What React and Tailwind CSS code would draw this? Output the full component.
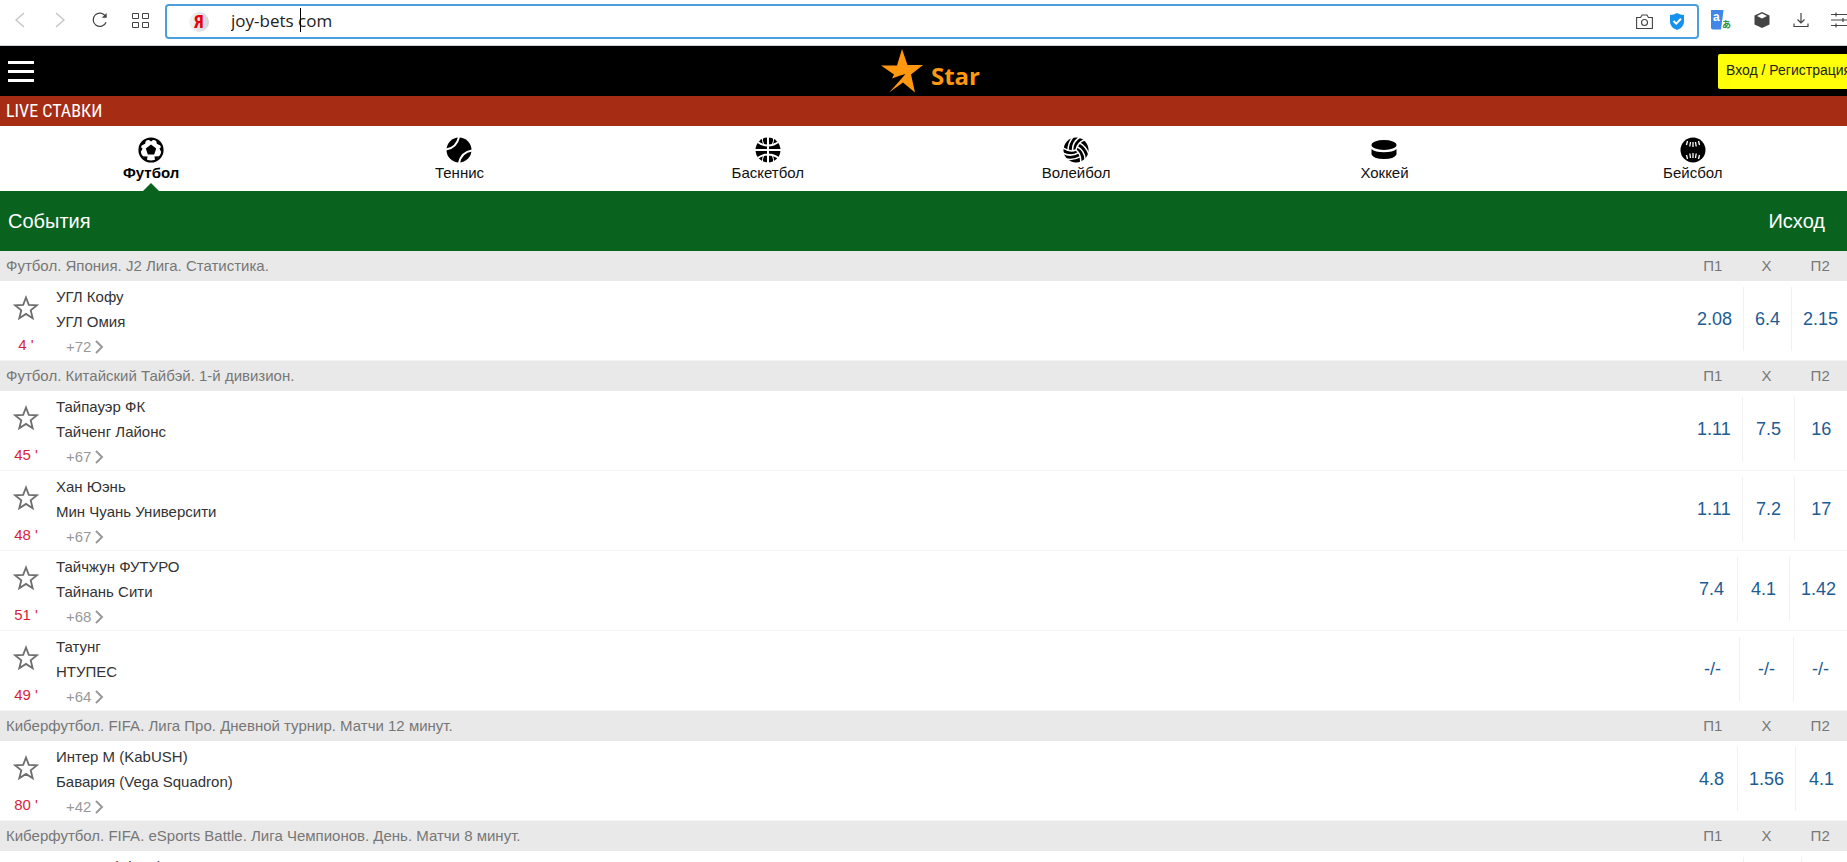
const sports = [
  { name: 'Футбол', icon: FootballIcon },
  { name: 'Теннис', icon: TennisIcon },
  { name: 'Баскетбол', icon: BasketballIcon },
  { name: 'Волейбол', icon: VolleyballIcon },
  { name: 'Хоккей', icon: HockeyIcon },
  { name: 'Бейсбол', icon: BaseballIcon },
];

const leagues = [
  {
    title: 'Футбол. Япония. J2 Лига. Статистика.',
    matches: [
      { home: 'УГЛ Кофу', away: 'УГЛ Омия', time: 4, more: 72, odds: ['2.08', '6.4', '2.15'] },
    ],
  },
  {
    title: 'Футбол. Китайский Тайбэй. 1-й дивизион.',
    matches: [
      { home: 'Тайпауэр ФК', away: 'Тайченг Лайонс', time: 45, more: 67, odds: ['1.11', '7.5', '16'] },
      { home: 'Хан Юэнь', away: 'Мин Чуань Университи', time: 48, more: 67, odds: ['1.11', '7.2', '17'] },
      { home: 'Тайчжун ФУТУРО', away: 'Тайнань Сити', time: 51, more: 68, odds: ['7.4', '4.1', '1.42'] },
      { home: 'Татунг', away: 'НТУПЕС', time: 49, more: 64, odds: ['-/-', '-/-', '-/-'] },
    ],
  },
  {
    title: 'Киберфутбол. FIFA. Лига Про. Дневной турнир. Матчи 12 минут.',
    matches: [
      { home: 'Интер М (KabUSH)', away: 'Бавария (Vega Squadron)', time: 80, more: 42, odds: ['4.8', '1.56', '4.1'] },
    ],
  },
  {
    title: 'Киберфутбол. FIFA. eSports Battle. Лига Чемпионов. День. Матчи 8 минут.',
    matches: [
      { home: 'Рома М (Pirate)', away: 'Интер М (Kray)', time: 3, more: 38, odds: ['2.08', '4.15', '2.6'] },
    ],
  },
];

function FootballIcon() {
  return (
    <svg viewBox="0 0 26 26" className="size-[26px]">
      <circle cx="13" cy="13" r="11.5" fill="#fff" stroke="#000" strokeWidth="2.2" />
      <path d="M13 7.6l5.2 3.8-2 6.1H9.8l-2-6.1z" />
      <path d="M9 1.6h8l-4 2.8zM1.8 9.6l.6 6.2 2.2-4.3zM24.2 9.6l-.6 6.2-2.2-4.3zM3.6 8.6l1-3.8 3.2-1.6-.6 3.6zM22.4 8.6l-1-3.8-3.2-1.6.6 3.6zM4.6 19.2l5 .2-.8 4.2zM21.4 19.2l-5 .2.8 4.2z" />
    </svg>
  );
}

function TennisIcon() {
  return (
    <svg viewBox="0 0 26 26" className="size-[26px]">
      <circle cx="13" cy="13" r="12.5" />
      <path d="M0 12.5Q10.5 11 13 0M13 26Q15.5 15 26 13.5" fill="none" stroke="#fff" strokeWidth="2" />
    </svg>
  );
}

function BasketballIcon() {
  return (
    <svg viewBox="0 0 26 26" className="size-[26px]">
      <circle cx="13" cy="13" r="12.5" />
      <path d="M13 0v26M0 13h26M2 4.5Q7 8.500 13 8.500T24 4.500M2 21.500Q7 17.500 13 17.500T24 21.500" fill="none" stroke="#fff" strokeWidth="2" />
      <path d="M7.500 0q-.5 4 1 7M18.500 0q.5 4-1 7M7.500 26q-.5-4 1-7M18.500 26q.5-4-1-7" fill="none" stroke="#fff" strokeWidth="1" />
    </svg>
  );
}

// one third of the ball, turned three times
const swirl = 'M13 13Q14 6 22 2.500M9.500 14Q9 5 17 0M5 13.500Q5 6 10 0';

function VolleyballIcon() {
  return (
    <svg viewBox="0 0 26 26" className="size-[26px]">
      <circle cx="13" cy="13" r="12.5" />
      <g fill="none" stroke="#fff" strokeWidth="1.5">
        <path d={swirl} />
        <path d={swirl} transform="rotate(120 13 13)" />
        <path d={swirl} transform="rotate(240 13 13)" />
      </g>
    </svg>
  );
}

function HockeyIcon() {
  return (
    <svg viewBox="0 0 26 26" className="size-[26px]">
      <ellipse cx="13" cy="8" rx="12.5" ry="5" />
      <path d="M.5 12Q4 15.3 13 15.3T25.5 12v5.5Q23 22 13 22T.5 17.5z" />
    </svg>
  );
}

function BaseballIcon() {
  return (
    <svg viewBox="0 0 26 26" className="size-[26px]">
      <circle cx="13" cy="13" r="12.5" />
      <path d="M7.5 4l-1 4M10.500 5l-.7 4.500M13 5v5M15.500 5l.7 4.500M18.500 4l1 4M7.500 22l-1-4M10.500 21l-.7-4.500M13 21v-5M15.500 21l.7-4.500M18.500 22l1-4" stroke="#fff" strokeWidth="1.3" />
    </svg>
  );
}

function BrowserBar() {
  return (
    <div className="flex h-[46px] items-start border-b border-gray-300 bg-white pt-1">
      <div className="flex h-8 w-[165px] shrink-0 items-center gap-6 pl-3">
        <button aria-label="Назад">
          <svg viewBox="0 0 16 16" className="size-4" fill="none" stroke="#c4c4c4" strokeWidth="1.3"><path d="M12 1L4 8l8 7" /></svg>
        </button>
        <button aria-label="Вперёд">
          <svg viewBox="0 0 16 16" className="size-4" fill="none" stroke="#c4c4c4" strokeWidth="1.3"><path d="M4 1l8 7-8 7" /></svg>
        </button>
        <button aria-label="Обновить">
          <svg viewBox="0 0 18 18" className="size-4" fill="none" stroke="#444" strokeWidth="1.4"><path d="M15.8 11.5A7.5 7.5 0 1 1 15.3 5" /><path d="M16.5 1v5.500H11z" fill="#444" stroke="none" /></svg>
        </button>
        <button aria-label="Экспресс-панель">
          <svg viewBox="0 0 17 15" className="h-[15px] w-[17px]" fill="none" stroke="#444" strokeWidth="1"><path d="M.5.5h6v5h-6zM10.5.5h6v5h-6zM.5 9.500h6v5h-6zM10.500 9.500h6v5h-6z" /></svg>
        </button>
      </div>
      <div className="relative flex h-[35px] flex-1 items-center rounded border-2 border-[#4a9fdc] pr-3 pl-[22px]">
        <span className="flex size-5 items-center justify-center rounded-full bg-gradient-to-r from-gray-100 to-gray-300 font-['Roboto_Condensed',Roboto,sans-serif] text-lg font-bold text-red-600">
          Я
        </span>
        <input
          type="text"
          aria-label="Адрес"
          defaultValue="joy-bets com"
          className="ml-[22px] min-w-0 flex-1 bg-transparent pb-[2px] font-['Open_Sans',sans-serif] text-[17px] text-[#222] outline-none"
        />
        <span className="absolute top-[2px] left-[133px] h-6 w-px bg-black"></span>
        <button aria-label="Снимок" className="mr-4">
          <svg viewBox="0 0 17 15" className="h-[15px] w-[17px]" fill="none" stroke="#444" strokeWidth="1.1"><path d="M.6 3.5h4L6 1h5l1.4 2.500h4v11H.6z" /><circle cx="8.5" cy="8.5" r="3" /></svg>
        </button>
        <button aria-label="Защита">
          <svg viewBox="0 0 16 17" className="h-[17px] w-4"><path d="M8 0Q11 2 15 2v7q0 5-7 8Q1 14 1 9V2q4 0 7-2z" fill="#1592f0" /><path d="M4.5 8l2.700 2.700L12 5.800" fill="none" stroke="#fff" strokeWidth="2" /></svg>
        </button>
      </div>
      <div className="flex h-8 w-[148px] shrink-0 items-center gap-[22px] overflow-hidden pl-3">
        <button aria-label="Переводчик" className="shrink-0">
          <svg viewBox="0 0 20 20" className="size-5"><path d="M0 0h12.500L10 19.500H2Q0 19.500 0 17.500z" fill="#3f86e8" /><text x="2" y="11" fontSize="12" fontWeight="700" fill="#fff" fontFamily="Liberation Sans">a</text><text x="11" y="18" fontSize="9" fontWeight="700" fill="#2f8f3c" fontFamily="Noto Sans CJK JP">あ</text></svg>
        </button>
        <button aria-label="Расширения" className="shrink-0">
          <svg viewBox="0 0 18 18" className="size-[18px]"><path d="M9 1l7.5 3.500v9L9 17l-7.500-3.500v-9z" fill="#444" /><path d="M9 2.500l5 2.500-5 2.500L4 5z" fill="#fff" /></svg>
        </button>
        <button aria-label="Загрузки" className="shrink-0">
          <svg viewBox="0 0 16 16" className="size-4" fill="none" stroke="#444" strokeWidth="1.2"><path d="M8 1v10M4.500 7.500L8 11l3.500-3.500M1 11.500v3h14v-3" /></svg>
        </button>
        <button aria-label="Настройки" className="shrink-0">
          <svg viewBox="0 0 18 16" className="h-4 w-[18px]" fill="none" stroke="#444" strokeWidth="1.2"><path d="M0 2.500h18M0 8h18M0 13.500h18M5 .5v4M12 6v4M5 11.500v4" /></svg>
        </button>
      </div>
    </div>
  );
}

function Header() {
  return (
    <header className="relative flex h-[50px] items-center justify-center bg-black">
      <button aria-label="Меню" className="absolute top-[15px] left-2 flex w-[26px] flex-col gap-[6px]">
        <span className="h-[3px] bg-white"></span>
        <span className="h-[3px] bg-white"></span>
        <span className="h-[3px] bg-white"></span>
      </button>
      <a href="#" className="flex items-center gap-2 pl-[14px] text-[#ff970f]">
        <svg viewBox="0 0 42 44" className="h-[44px] w-[42px]" fill="currentColor">
          <path d="M21 0l5.5 16H42L30 25.500 34 43.500 22 33.500 8 43.500Q15 36 24.500 25 17 27 11 29.500L13 25.500 0 16.500h16z" />
        </svg>
        <span className="pt-[10px] font-['Open_Sans',sans-serif] text-2xl font-bold">Star</span>
      </a>
      <button className="absolute top-2 left-[calc(100%-129px)] h-[35px] rounded-xs bg-[#ffff0a] px-2 pb-[3px] text-sm whitespace-nowrap text-[#222]">
        Вход / Регистрация
      </button>
    </header>
  );
}

function SportTabs() {
  return (
    <nav className="-ml-[3px] grid h-[65px] grid-cols-6 bg-white">
      {sports.map(({ name, icon: Icon }, i) => (
        <a key={name} href="#" className="relative flex flex-col items-center pt-[11px] text-[15px] leading-5 text-[#111]">
          <Icon />
          <span className={i === 0 ? 'font-bold text-black' : ''}>{name}</span>
          {i === 0 && (
            <span className="absolute bottom-0 border-x-8 border-b-8 border-x-transparent border-b-[#09631f]"></span>
          )}
        </a>
      ))}
    </nav>
  );
}

function Match({ match }) {
  return (
    <div className="flex h-20 border-b border-[#f5f5f5] bg-white">
      <div className="flex w-[52px] shrink-0 flex-col items-center pt-[14px]">
        <button aria-label="В избранное">
          <svg viewBox="0 0 26 26" className="size-[26px]" fill="none" stroke="#6e6e6e" strokeWidth="1.8">
            <path d="M13 2.500l2.800 7.300 8.200.5-6.300 5 2 8L13 18.900l-6.700 4.400 2-8L2 10.300l8.200-.5z" />
          </svg>
        </button>
        <span className="mt-3 text-[15px] leading-6 text-[#d81e3c]">{match.time} '</span>
      </div>
      <div className="flex-1 pt-[3px] pl-1 text-[15px] leading-[25px] text-[#333]">
        <div>{match.home}</div>
        <div>{match.away}</div>
        <a href="#" className="flex items-center gap-1 pl-[10px] text-[#999]">
          +{match.more}
          <svg viewBox="0 0 9 14" className="h-[14px] w-[9px]" fill="none" stroke="#999" strokeWidth="2"><path d="M1 1l6 6-6 6" /></svg>
        </a>
      </div>
      <div className="flex w-[161px] shrink-0 pt-[6px] pb-[9px]">
        {match.odds.map((odd, i) => (
          <button key={i} className="flex-1 border-r border-[#f1f1f1] px-[11px] text-lg text-[#1d5c93] last:border-r-0">
            {odd}
          </button>
        ))}
      </div>
    </div>
  );
}

export default function App() {
  return (
    <div className="h-screen overflow-hidden bg-white font-['Liberation_Sans',Arial,sans-serif]">
      <BrowserBar />
      <Header />
      <h1 className="h-[30px] bg-[#a62c14] pl-[6px] font-['Roboto_Condensed',Roboto,sans-serif] text-lg leading-[30px] font-normal text-white">
        LIVE СТАВКИ
      </h1>
      <SportTabs />
      <div className="flex h-[60px] items-center justify-between bg-[#09631f] pr-[22px] pl-2 text-xl text-white">
        <span>События</span>
        <span>Исход</span>
      </div>
      {leagues.map((league) => (
        <section key={league.title}>
          <div className="flex h-[30px] items-center bg-[#e9e9e9] text-[15px] text-[#777]">
            <h2 className="flex-1 pl-[6px]">{league.title}</h2>
            <div className="grid w-[161px] grid-cols-3 text-center">
              <span>П1</span>
              <span>X</span>
              <span>П2</span>
            </div>
          </div>
          {league.matches.map((match) => (
            <Match key={match.home} match={match} />
          ))}
        </section>
      ))}
    </div>
  );
}
